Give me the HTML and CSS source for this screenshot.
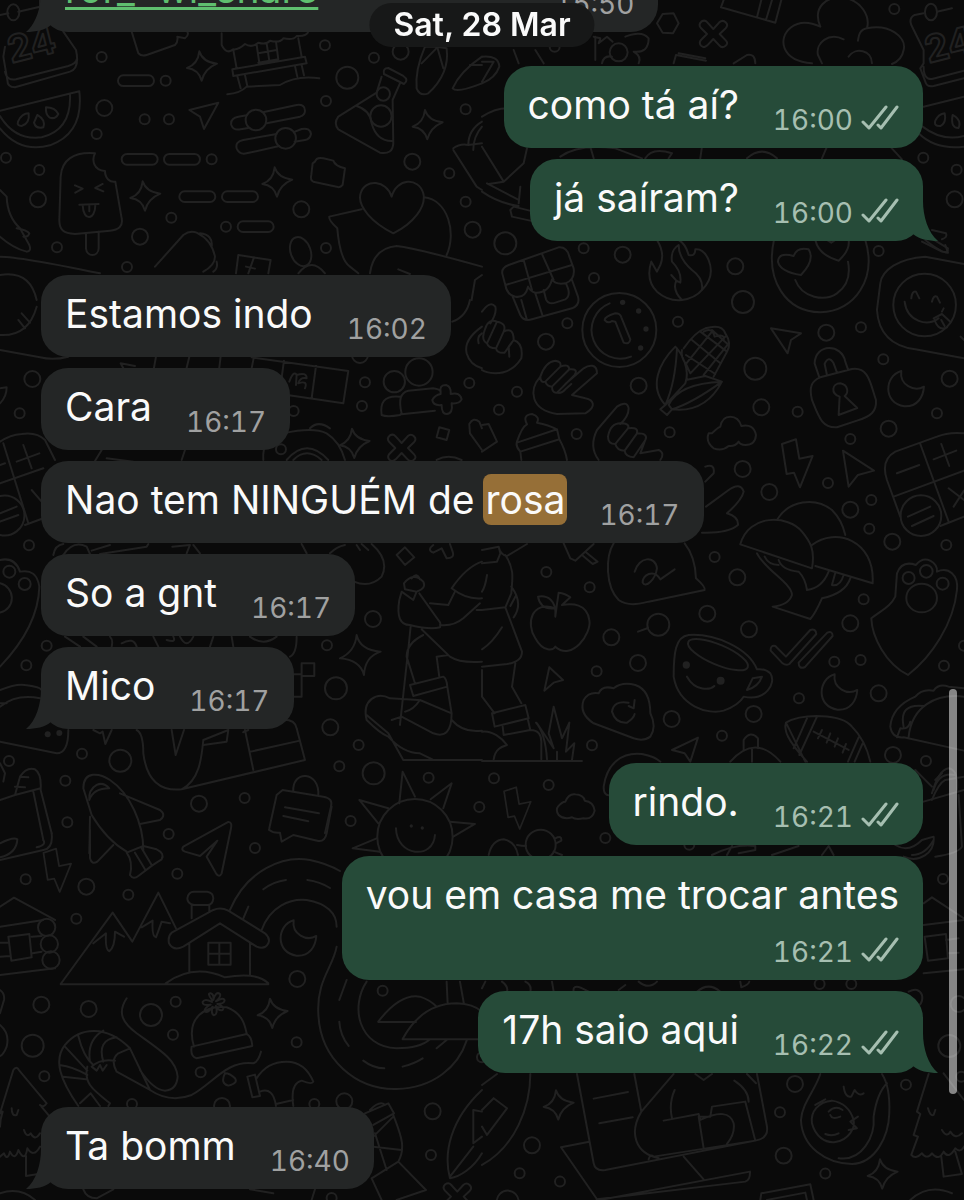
FILE: index.html
```html
<!DOCTYPE html>
<html lang="pt">
<head>
  <meta charset="UTF-8" />
  <meta name="viewport" content="width=device-width, initial-scale=1.0"/>
  <title>Chat</title>
  <link rel="stylesheet" href="styles.css">
</head>
<body>

  <!-- Doodle wallpaper -->
  <svg class="wallpaper" viewBox="0 0 964 1200" preserveAspectRatio="xMidYMin slice" aria-hidden="true">
    <defs>
      <circle id="s" r="15"/>
      <circle id="m" r="24"/>
      <circle id="l" r="33"/>
      <path id="star" d="M-8 -44Q2 -12 45 -7Q8 8 -1 44Q-10 10 -45 6Q-12 -6 -8 -44Z"/>
      <path id="moon" d="M-14 -52C-65 -38 -70 45 -5 54C35 56 52 25 54 -5C25 12 -20 -10 -14 -52Z"/>
      <path id="bolt" d="M-50 -58L-8 -72L2 -14L42 -22L4 72L-14 28L-36 32Z"/>
      <path id="cross" d="M0 -15L18 -35Q28 -44 37 -35Q46 -26 37 -17L19 0L38 20Q46 28 36 36Q26 44 18 34L0 15L-18 34Q-28 44 -37 35Q-44 26 -37 18L-19 0L-37 -18Q-46 -28 -36 -37Q-26 -44 -18 -35Z"/>
      <rect id="dash" x="-54" y="-16" width="108" height="32" rx="16"/>
    </defs>

    <g transform="scale(.3333)">
      <!-- calendar and watermelon -->
      <text class="doodle-text" transform="translate(34 190) rotate(-14)">24</text>
      <path d="M0 45L25 40M55 35L120 20M120 0V45M190 95L228 150Q240 205 210 215L45 262Q22 262 22 240L10 170L15 140M15 215Q20 243 48 238L205 198Q230 190 230 178"/>
      <ellipse cx="40" cy="37" rx="18" ry="24"/>
      <path d="M0 332L238 274Q252 400 150 436Q60 460 0 385M0 348Q45 422 125 412Q215 390 210 283"/>
      <path d="M54 365Q65 340 86 340Q90 370 65 378Q50 378 54 365ZM112 345Q138 360 130 382Q108 388 102 368ZM138 322Q165 322 175 342Q165 360 148 352Q136 342 138 322Z"/>
      <!-- ice cream -->
      <path d="M182 530C185 480 220 455 285 460C275 480 280 510 315 513C315 535 330 548 346 545L365 655C370 680 355 690 330 692L225 702C190 700 178 690 178 660ZM258 700V745C260 772 295 772 296 745V695M225 556L248 566L226 578M308 552L286 564L310 574M238 614L296 612M248 616C250 665 286 662 286 614M268 616V634"/>
      <path d="M0 570L20 590M20 590Q22 650 60 685L88 735Q95 755 80 755Q40 745 0 710M50 685Q80 690 88 700Q85 712 70 710M0 770Q60 770 300 820M0 825Q90 810 110 900"/>
      <!-- market stall, sliders -->
      <path d="M395 95L415 160Q425 170 440 165L525 135Q535 125 532 110L555 115Q568 105 562 95M665 100V135Q680 165 700 148Q715 150 735 132Q755 145 775 128Q800 135 810 122Q840 130 850 115Q880 122 890 108Q920 110 925 95M700 150L710 205M895 115L905 170M770 135L778 188M800 130L808 182M775 160L830 150M775 188L835 178L828 125M697 208L915 170L920 190L700 228ZM712 228L722 265M735 225L742 258M885 198L892 230M905 195L912 226M682 283Q720 280 740 260L840 255Q890 225 958 235"/>
      <path d="M740 346L715 350Q690 355 694 375Q700 392 722 388L745 384M792 336L890 315Q915 312 915 332Q915 345 900 350L800 370M830 402L730 420Q705 425 710 445Q718 465 740 460L838 438M885 395L905 387Q930 382 933 402Q930 418 915 420L884 425"/>
      <circle cx="768" cy="360" r="31"/><circle cx="857" cy="415" r="31"/>
      <path d="M568 330L655 308L612 387L600 350Z"/>
      <!-- flask -->
      <path d="M1165 204L1210 228Q1228 240 1212 252L1152 222Q1148 204 1165 204ZM1145 230L1130 278L1015 350Q1000 370 1015 388L1140 458Q1178 465 1180 430L1178 300L1200 250M1070 318Q1110 330 1115 370Q1130 425 1178 423"/>
      <circle cx="1150" cy="282" r="20"/><circle cx="1143" cy="348" r="32"/>
      <path d="M1275 140Q1245 210 1250 265Q1260 290 1285 280Q1350 220 1340 145L1310 140ZM1265 190L1312 142L1330 205M1446 170Q1380 215 1358 265Q1370 280 1446 250M1410 195H1446"/>
      <!-- lego, heart, hand -->
      <path d="M938 490L945 485Q950 470 970 475L1000 482Q1005 498 1035 505L1028 555Q1020 565 1010 560L940 545Q930 540 934 525Z"/>
      <path d="M1180 700C1120 670 1070 620 1082 580C1095 535 1160 540 1175 590C1190 535 1255 530 1270 580C1280 620 1240 670 1180 700ZM1085 628L988 650Q985 660 1012 685Q1020 780 1050 800L1075 820M1272 592C1345 600 1370 700 1340 765M1110 820Q1120 745 1190 738Q1250 745 1446 800M1195 808L1230 822M1446 825L1425 840L1415 900"/>
      <path d="M1446 365Q1405 390 1405 435M1360 445Q1380 430 1405 435L1446 430M1360 450L1430 560L1446 570M1446 380Q1420 410 1420 450"/>
      <path d="M465 800L550 705Q570 690 590 698Q635 720 645 770Q645 795 610 815M600 700Q640 705 635 740M650 785Q655 805 640 815M715 765L812 780L805 820M715 765L708 820M762 772L745 820M738 800L765 806"/>
      <ellipse cx="902" cy="755" rx="30" ry="45" transform="rotate(-20 902 755)"/>
      <path d="M895 820Q935 770 975 820"/>
      <use href="#dash" x="408" y="242"/><use href="#dash" x="419" y="478"/><use href="#dash" x="546" y="478"/><use href="#dash" x="592" y="590"/><use href="#dash" x="720" y="590"/><use href="#dash" x="767" y="680"/>
      <use href="#star" x="606" y="198"/><use href="#star" x="436" y="588"/><use href="#star" x="832" y="546"/><use href="#star" x="1283" y="374"/>
      <use href="#s" x="305" y="171"/><use href="#s" x="497" y="242"/><use href="#s" x="434" y="358"/><use href="#s" x="507" y="358"/><use href="#s" x="290" y="402"/><use href="#s" x="18" y="473"/><use href="#s" x="118" y="510"/><use href="#s" x="635" y="478"/><use href="#s" x="514" y="653"/><use href="#s" x="678" y="680"/><use href="#s" x="171" y="742"/><use href="#s" x="381" y="801"/><use href="#s" x="975" y="136"/><use href="#s" x="1122" y="173"/><use href="#s" x="978" y="303"/><use href="#s" x="1397" y="328"/><use href="#s" x="1348" y="520"/><use href="#s" x="1397" y="605"/><use href="#s" x="978" y="744"/>
      <use href="#m" x="313" y="324"/><use href="#m" x="114" y="598"/><use href="#m" x="420" y="710"/><use href="#m" x="904" y="628"/><use href="#m" x="1237" y="485"/><use href="#m" x="1418" y="689"/><use href="#m" x="1202" y="155"/><use href="#l" x="1042" y="233"/>
    </g>

    <g transform="translate(482 0) scale(.3333)">
      <!-- blossom, hexagon, second calendar -->
      <path d="M525 70L542 42L575 40L590 70L573 100L542 98ZM725 0L717 22L880 68L898 0M838 0L825 52M870 0L852 60"/>
      <use href="#cross" x="694" y="102"/>
      <path d="M1015 80C990 20 1035 -10 1080 -8C1140 0 1165 50 1155 85C1130 90 1130 110 1128 122M1155 85C1220 70 1275 110 1265 150Q1260 180 1230 192M1015 80C940 45 890 100 908 145Q925 185 990 190M1085 118C1040 95 1000 130 1008 165L1020 190M1100 170C1120 140 1170 150 1170 190"/>
      <text class="doodle-text" transform="translate(1340 190) rotate(-14)">24</text>
      <path d="M1325 40L1298 45Q1280 55 1288 75L1325 150V190L1315 205L1330 245Q1335 262 1355 258L1446 235M1325 200Q1325 240 1350 237L1446 212M1365 35L1410 25"/>
      <ellipse cx="1347" cy="36" rx="18" ry="25"/>
      <path d="M1325 320L1446 290M1310 400Q1360 450 1446 440M1322 380Q1380 425 1446 408M1360 362Q1370 342 1388 340Q1394 368 1376 378Q1355 380 1360 362ZM1412 345Q1440 360 1430 384Q1405 385 1412 345Z"/>
      <path d="M335 110L355 115L350 130L375 110L392 125M340 110V180M430 110Q480 90 500 115Q500 160 455 155Q480 170 470 190M360 190Q365 165 390 170"/><circle cx="410" cy="157" r="27"/>
      <path d="M575 190L582 165L672 182M590 160L670 175M755 190L795 165Q820 160 820 190M95 150L110 190M160 150L185 190M0 170Q50 165 52 200Q40 235 0 250M0 185L35 185L0 245"/>
      <!-- paper bag left of the bubbles -->
      <path d="M0 350Q40 325 75 325M0 440L65 545L125 490L135 445M15 550L110 600M0 575Q50 610 110 618M65 545L20 552M115 560L110 610M85 630L95 620L155 635M85 630L90 650L158 665M235 470Q290 430 400 445L480 475M325 440L335 475M490 475Q510 440 570 460L560 475M660 440L655 475M795 475Q840 435 885 475M1035 440L1020 475M1225 440L1260 478"/>
      <path d="M1350 690L1392 700Q1398 712 1380 718M1330 700L1360 722L1398 745Q1400 760 1380 755L1320 725"/>
      <use href="#s" x="1237" y="27"/><use href="#s" x="218" y="140"/><use href="#s" x="1324" y="473"/><use href="#s" x="1424" y="509"/><use href="#m" x="1418" y="598"/>
    </g>

    <g transform="translate(482 240) scale(.3333)">
      <!-- shop, flame, heart-eyes -->
      <path d="M62 105Q55 85 80 75L230 22Q255 20 262 50L275 85Q280 120 250 130Q220 135 210 118Q200 160 160 158Q145 155 138 140Q130 175 100 170Q75 165 70 135ZM70 135L270 75M125 60L150 150M180 42L215 120M92 170L115 225Q125 245 150 238L270 205Q295 195 288 170L270 120M118 180L135 240M160 160L182 228M185 150L192 178Q200 195 220 188L250 178Q265 170 258 145L252 130"/>
      <path d="M525 0Q550 40 535 75L525 95L508 65Q490 120 525 155Q560 185 600 180Q570 150 583 122L595 128Q600 95 570 65Q565 30 590 15Q590 55 630 90Q665 115 660 150Q700 110 680 60Q665 25 640 28Q640 50 620 45Q610 10 590 0M568 105L583 122M600 180Q640 175 660 150"/>
      <circle cx="412" cy="270" r="111"/><path d="M447 350A86 86 0 1 1 383 190"/>
      <path d="M390 243Q378 252 368 240Q368 230 400 220Q415 220 418 232L445 298Q442 315 425 308L400 245Z"/>
      <g class="solid"><circle cx="422" cy="187" r="8"/><circle cx="470" cy="213" r="8"/><circle cx="492" cy="267" r="8"/><circle cx="476" cy="324" r="8"/></g>
      <path d="M876 0C850 120 910 215 1015 217C1120 215 1185 115 1150 0M957 105Q895 95 888 65Q890 35 935 48Q945 20 980 28Q1000 60 957 105ZM1000 0Q1010 45 1070 62Q1105 30 1100 0M1035 0L1048 8L1060 0M940 120C960 175 1030 185 1065 160C1100 135 1105 100 1098 65"/>
      <!-- smiley bubble -->
      <path d="M1446 72L1330 50C1250 55 1200 90 1195 130L1185 210C1190 290 1240 320 1300 328L1446 355M1268 185C1275 245 1340 262 1370 235M1380 215L1385 205M1288 175Q1290 152 1302 155L1312 175M1350 185Q1355 165 1365 170L1374 188M1355 235L1380 222L1405 245M1358 240Q1370 275 1395 262M1378 240L1388 258M1330 0Q1380 40 1398 38L1390 15M1436 290L1446 300"/>
      <circle cx="1328" cy="195" r="94"/>
      <!-- hands -->
      <path d="M0 215Q25 180 40 200Q45 220 25 250M10 265Q20 235 45 245L15 310M15 310Q-5 300 10 265M45 245Q75 250 65 275L42 325Q20 325 15 310M65 275Q95 260 95 300L68 338Q45 340 42 325M95 300Q125 310 118 355Q90 400 40 400Q10 398 0 390M82 350L80 320L95 300"/>
      <path d="M175 410C140 450 145 510 225 522L310 520C345 500 335 480 310 475L270 465L345 400C345 370 320 375 305 385L250 432M175 410Q190 365 220 362Q240 365 235 380L190 425Q175 430 175 410M235 380Q260 370 262 388L210 440Q195 440 190 425M262 388Q290 385 278 405L225 458Q210 460 210 440M225 458Q238 462 250 448L268 432"/>
      <path d="M350 660Q320 620 345 570L405 500Q435 480 440 505Q440 530 415 552M378 590Q385 550 415 550Q445 550 438 565L400 612Q378 612 378 590M438 565Q470 560 465 580L428 632Q405 632 400 612M465 580Q500 580 490 600L455 652Q430 650 428 632M490 600L475 640L530 630Q550 640 535 660"/>
      <!-- corn -->
      <path d="M580 320C530 370 500 440 550 495L610 430C625 390 600 340 580 320ZM585 325Q580 430 550 495L535 508L555 525L570 508L560 495Q590 430 720 425Q670 520 570 508M570 508Q630 490 720 425L670 408L612 420M605 325Q640 275 670 265Q720 250 730 280Q750 310 735 335L695 410M600 330Q595 350 612 372L625 400M612 345L700 402M630 300L715 370M655 275L735 335M690 270L740 315M612 372L690 275M625 400L730 290M665 405L740 310M665 275Q690 260 698 290Q730 280 725 300"/>
      <path d="M867 265L957 280L927 300L917 340Z"/>
      <!-- lock -->
      <path d="M1012 412L998 370C1000 310 1080 310 1090 365L1098 388M1035 405L1028 372Q1040 345 1055 370L1065 398M1015 412L1110 387C1160 380 1165 430 1182 480C1185 515 1165 530 1125 542L1065 562C1020 565 1010 530 990 480C980 440 990 422 1015 412ZM1070 525L1073 470C1045 460 1050 430 1075 430C1100 435 1100 460 1088 468L1126 504Z"/>
      <use href="#moon" x="1272" y="445"/><use href="#bolt" x="950" y="670"/>
      <path d="M690 580Q710 560 715 560Q720 530 745 530Q770 530 778 558Q815 550 822 585Q820 615 790 615Q775 615 770 605Q760 620 740 618Q720 635 695 625Q670 605 680 580ZM1083 632L1176 692L1128 705L1100 740Z"/>
      <!-- baby bottle, calculator -->
      <path d="M118 660L115 635Q100 620 105 605Q120 560 135 553Q120 525 150 522Q175 530 165 548Q200 555 225 568L232 598L115 635M105 608L225 568M232 598Q250 630 255 660M0 555L20 552L45 605L0 635"/>
      <path d="M1446 580Q1400 575 1365 590L1240 635Q1195 660 1215 720L1255 830M1315 612L1400 845M1235 770L1446 692M1375 858L1446 830M1245 700L1312 675M1355 658L1423 632M1378 612L1402 678M1400 745L1446 780M1446 752L1415 800M1278 830L1345 800M1290 858L1355 828"/><circle cx="1317" cy="827" r="61"/>
      <!-- hand behind the highlighted message -->
      <path d="M670 680Q700 670 695 700L670 725M672 800L740 750Q775 725 785 755Q780 780 735 820Q770 830 768 855Q740 880 660 878"/>
      <use href="#s" x="305" y="25"/><use href="#s" x="336" y="114"/><use href="#s" x="256" y="250"/><use href="#s" x="588" y="245"/><use href="#s" x="1190" y="33"/><use href="#s" x="1137" y="262"/><use href="#s" x="1204" y="358"/><use href="#s" x="105" y="455"/><use href="#s" x="51" y="509"/><use href="#s" x="284" y="582"/><use href="#s" x="563" y="577"/><use href="#s" x="947" y="515"/><use href="#s" x="1365" y="520"/><use href="#s" x="1105" y="597"/><use href="#s" x="1038" y="729"/><use href="#s" x="1168" y="780"/><use href="#s" x="1162" y="866"/>
      <use href="#m" x="422" y="44"/><use href="#m" x="760" y="79"/><use href="#m" x="192" y="305"/><use href="#m" x="470" y="437"/><use href="#m" x="1033" y="278"/><use href="#m" x="838" y="502"/><use href="#m" x="1403" y="416"/><use href="#m" x="1220" y="566"/><use href="#m" x="782" y="687"/><use href="#m" x="862" y="756"/><use href="#m" x="1105" y="809"/>
      <use href="#l" x="70" y="10"/><use href="#l" x="783" y="186"/><use href="#l" x="820" y="386"/>
    </g>

    <g transform="translate(0 300) scale(.3333)">
      <path d="M0 105Q85 110 110 20M55 60L75 85M65 40L90 68M0 150L120 172Q160 182 205 170M0 265L20 262Q20 290 0 310"/>
      <!-- film strip, people -->
      <path d="M370 205L362 190L405 198M468 170L462 203M568 170L560 203M662 170L658 203M755 172L1045 213L1030 310L862 285M852 182L840 270M948 198L935 295M868 245Q880 210 890 225L888 255M890 225Q920 215 920 235Q900 230 895 250Q925 240 915 265M762 170L755 205"/>
      <circle cx="1183" cy="245" r="32"/><circle cx="1257" cy="216" r="41"/>
      <path d="M1200 290C1150 285 1140 310 1145 345Q1160 352 1200 345L1205 340M1205 340Q1190 280 1225 272L1300 265Q1320 268 1322 275M1205 343L1305 332M1322 275Q1318 255 1338 255Q1355 260 1352 282Q1380 275 1385 298Q1378 312 1355 310Q1360 340 1340 342Q1325 342 1325 315Q1300 318 1297 300Q1305 285 1322 282Z"/>
      <path d="M1357 65Q1400 50 1410 0M1446 80Q1390 120 1400 160Q1410 195 1446 205M1446 100Q1430 110 1436 130"/>
      <use href="#cross" x="1205" y="444"/><use href="#star" x="1064" y="430"/>
      <path d="M1318 382L1348 390L1340 420L1310 412ZM1408 372Q1420 350 1438 365L1446 385M1408 372L1410 400L1446 450M790 480Q785 410 850 400Q940 380 980 400Q1020 425 1035 480M860 480Q920 410 985 480M880 480Q920 440 965 480M930 385Q955 360 990 385M1310 480Q1345 460 1385 480"/>
      <!-- calculator on the left edge -->
      <path d="M0 425Q30 405 65 402Q110 395 135 420L165 480M10 430L85 670M0 550L130 505M75 675L130 655M50 485L118 460M70 435L95 505M95 570L125 605M0 495L15 490M0 640L50 620M0 665L55 645"/>
      <path d="M0 588A60 60 0 1 1 0 705M305 450L285 483M555 450L545 480M320 475L400 485M160 765Q165 735 190 732M190 765Q220 720 260 740L270 762M275 752L330 735M300 762L440 740L445 732M517 740L570 735L560 760M580 735L600 760M905 732L920 760M990 760Q1010 740 1035 735M1115 732Q1170 780 1145 830Q1110 865 1062 845M1070 735L1080 750M1085 732L1105 750M1300 735Q1280 750 1300 758L1325 745L1340 775Q1365 775 1358 755L1350 732M1215 742L1243 772L1215 795L1190 765Z"/>
      <!-- paw on the left edge -->
      <path d="M0 780Q45 770 60 815Q110 805 118 860Q115 980 0 1100"/><circle cx="28" cy="815" r="18"/><circle cx="74" cy="852" r="18"/><path d="M0 850A45 45 0 0 1 0 938"/>
      <use href="#m" x="97" y="237"/><use href="#s" x="59" y="340"/><use href="#s" x="1095" y="247"/><use href="#s" x="1086" y="318"/><use href="#s" x="881" y="333"/><use href="#s" x="1408" y="249"/><use href="#s" x="843" y="448"/><use href="#s" x="87" y="736"/><use href="#m" x="1080" y="165"/>
    </g>

    <g transform="translate(482 500) scale(.3333)">
      <!-- mushrooms -->
      <path d="M775 133C800 40 920 45 960 95C985 125 1000 150 990 205ZM885 60C920 0 1000 -10 1050 30Q1080 60 1090 105M990 135C1060 80 1180 120 1172 250L1000 198M825 160C850 210 930 250 930 285Q920 315 872 320L985 357Q1000 340 1020 295Q1090 280 1105 235M848 170Q860 195 890 195M890 180Q900 210 950 215Q970 235 975 270Q1020 265 1040 215M1060 218L1050 255Q1075 260 1085 225"/>
      <!-- note bubble, apple -->
      <path d="M395 130C370 170 370 260 410 300C440 320 470 312 500 305L668 270Q672 262 642 235Q640 170 608 130M458 215C470 170 520 165 525 205C520 240 490 265 482 248C480 225 515 205 535 238L578 208"/>
      <path d="M220 325C150 300 130 370 160 415C185 460 215 450 220 440C270 485 330 400 322 360C315 310 270 310 240 315L265 292Q250 280 230 278Q225 310 220 350C225 300 195 285 168 290Q175 330 218 325M468 395L498 384M245 130L265 175L280 182L335 132M310 155L347 185L332 192L300 165"/>
      <path d="M0 150L50 140L55 160L45 185L0 190M50 140Q55 165 75 168L135 132M70 165C100 210 90 240 88 280L70 322L120 455Q120 485 75 492L0 500M0 330L70 322M60 382Q30 430 0 448M15 225Q10 260 0 275M88 260Q125 310 95 352M100 290L85 318M100 490L90 560L118 610M0 510V590L38 640L30 640L130 615L140 655L38 680L30 640M62 680L65 705L145 690L138 660M35 778C40 745 60 740 75 735C60 715 30 690 0 695M145 690Q180 690 178 730V778M0 783H300M162 668Q190 700 195 778M165 670L215 745L200 700L215 620L240 715L262 668L252 755L277 730L270 780M225 755V780"/>
      <!-- mug -->
      <path d="M620 405C580 410 575 460 575 530C590 620 680 645 725 632Q770 615 785 590C850 605 885 550 865 520Q850 505 825 508C800 445 700 400 620 405ZM615 530C640 575 685 570 697 558M795 570L812 535L840 530Q830 560 795 570Z"/>
      <ellipse cx="708" cy="464" rx="97" ry="30" transform="rotate(23 708 464)"/>
      <g class="solid"><circle cx="613" cy="495" r="11"/><circle cx="716" cy="542" r="12"/></g>
      <path d="M880 438L912 470L985 390Q1002 385 1003 402L922 492Q912 498 902 490L866 452Q865 435 880 438ZM950 488L1036 398Q1052 392 1052 408L968 502Q950 508 950 488ZM187 572L202 502L243 540L215 548Z"/>
      <path d="M350 580Q360 555 395 565Q420 545 460 555Q505 570 505 640Q525 680 505 710Q485 725 455 715L335 670Q290 640 305 600Q320 575 350 580ZM440 608Q395 600 390 635Q400 670 435 668Q455 655 458 642M440 618L455 625L458 600"/>
      <!-- paw -->
      <path d="M1278 525C1210 490 1170 410 1168 355C1200 330 1225 320 1240 290L1245 220Q1260 180 1302 195C1330 160 1370 190 1365 215C1400 200 1430 225 1425 270C1415 370 1350 470 1278 525Z"/>
      <circle cx="1280" cy="234" r="18"/><circle cx="1333" cy="214" r="19"/><circle cx="1382" cy="251" r="18"/><ellipse cx="1319" cy="294" rx="46" ry="43"/>
      <!-- taco, football -->
      <path d="M1446 565L1400 560Q1370 550 1355 572Q1320 565 1300 590Q1230 620 1225 680Q1230 715 1265 712L1446 752M1446 590C1360 580 1290 620 1280 710M1245 712L1255 685Q1280 690 1285 665M1265 680Q1250 610 1325 618M1350 900Q1370 850 1390 840L1446 830M1350 860L1300 810"/>
      <path d="M975 785C915 720 905 690 912 668C960 640 1080 640 1110 680Q1150 720 1165 785M912 668L970 785M975 655L935 745M1005 650L952 765M1130 712L1098 785M1142 730L1118 785M995 695L1100 750M1020 690L1008 715M1045 700L1034 728M1068 715L1058 740M1092 732L1082 758"/>
      <use href="#moon" x="1072" y="575"/>
      <path d="M570 750L648 713L625 785L608 760ZM365 860C375 790 420 755 480 762Q520 770 535 785M365 860Q365 890 385 885M745 785Q820 700 895 785M785 750V720Q805 690 828 715V745M810 745V785M1355 870Q1370 815 1420 825M1380 820L1360 840"/>
      <use href="#s" x="193" y="216"/><use href="#s" x="323" y="262"/><use href="#s" x="698" y="171"/><use href="#s" x="344" y="514"/><use href="#s" x="330" y="736"/><use href="#s" x="720" y="707"/><use href="#s" x="951" y="595"/><use href="#s" x="1057" y="485"/><use href="#s" x="1136" y="480"/><use href="#s" x="1145" y="298"/><use href="#s" x="1393" y="135"/><use href="#s" x="1386" y="497"/><use href="#s" x="1332" y="783"/><use href="#s" x="1446" y="437"/>
      <use href="#m" x="766" y="232"/><use href="#m" x="676" y="341"/><use href="#m" x="388" y="412"/><use href="#m" x="468" y="489"/><use href="#m" x="801" y="388"/><use href="#m" x="1105" y="370"/><use href="#m" x="1231" y="125"/><use href="#m" x="1190" y="580"/><use href="#m" x="815" y="642"/><use href="#m" x="569" y="657"/><use href="#m" x="1233" y="765"/><use href="#l" x="529" y="374"/>
    </g>

    <g transform="translate(0 540) scale(.3333)">
      <!-- musician -->
      <path d="M1198 180C1190 230 1200 255 1230 255Q1290 270 1320 262Q1325 250 1315 240L1258 160M1198 180L1205 155L1240 180L1250 155M1212 130Q1240 95 1270 125Q1280 145 1250 155L1215 148ZM1235 115Q1250 95 1260 118M1320 255Q1360 260 1390 235L1440 190M1290 190L1345 195L1365 155M1446 65Q1400 80 1355 145Q1400 180 1446 175M1232 260L1228 300L1200 555M1265 268L1350 350Q1380 370 1446 365M1270 285Q1220 310 1220 350L1245 430M1230 435L1330 410Q1340 415 1342 440L1240 468ZM1310 350L1318 410M1310 350L1345 345M1260 480Q1240 510 1215 515M1342 440L1355 520Q1355 600 1300 580L1205 530L1175 540M1260 480L1355 520M1100 540C1085 480 1130 455 1170 475L1255 480M1100 525L1165 580L1210 660H1446M1100 540Q1140 580 1165 590Q1210 640 1260 640L1300 660M1355 540Q1390 580 1446 572M1430 210H1446"/>
      <path d="M1070 285Q1080 330 1142 335Q1095 350 1092 405Q1080 360 1020 355Q1065 335 1070 285ZM905 370H943V408H905ZM870 403H905V470H870M195 290L240 320M250 290L290 320M335 320Q340 300 330 290M365 310Q400 290 410 320M460 290L475 320M500 300Q530 310 520 290M540 290Q560 330 580 290M640 290L630 320M695 290L700 320M750 290Q790 320 830 290M890 290Q890 340 870 350"/>
      <!-- taco on the left -->
      <path d="M0 450Q50 430 75 435Q120 440 125 450M0 500Q50 460 120 475M0 605L170 640Q205 640 205 570M0 490L20 490"/><g class="solid"><circle cx="143" cy="583" r="9"/><circle cx="178" cy="579" r="9"/></g>
      <path d="M280 570L300 580L308 575L316 612L335 570M410 570Q430 580 430 640C440 720 480 755 545 748C600 720 605 650 610 600L685 570M515 570L527 645L552 570M610 615L680 605L685 570M545 748L915 660L890 565Q885 535 840 540M735 570L760 690M752 635L900 602M735 575Q720 580 745 570"/>
      <!-- message card, plane -->
      <path d="M880 755C875 690 960 690 955 768M848 750L970 770Q1000 775 993 800L975 880M830 765L848 750M830 765L808 865Q806 870 808 870M855 802L957 820M850 828L925 844"/>
      <path d="M250 745C250 690 300 700 330 720C390 760 430 850 430 930M250 745L275 825Q320 900 380 935M268 780Q265 750 290 735Q310 725 328 745Q280 745 268 780M360 760L480 810Q500 825 480 840L420 852M270 830L268 940"/>
      <path d="M0 670L15 700L10 725M45 765L0 780M45 765L60 710Q80 680 105 688Q125 700 122 750L155 880M45 765L122 745M60 710L85 712M45 740L75 742M100 755L130 900"/>
      <!-- sun -->
      <circle cx="1245" cy="890" r="113"/><path d="M1198 790L1208 695L1245 770M1292 778L1355 730L1330 805M1350 845L1425 852L1360 890M1165 805L1078 780L1135 850M1140 935L1058 925L1130 895M1188 865C1190 950 1300 960 1305 885"/><g class="solid"><circle cx="1234" cy="858" r="5"/><circle cx="1267" cy="864" r="5"/></g>
      <use href="#s" x="140" y="317"/><use href="#s" x="79" y="376"/><use href="#s" x="246" y="641"/><use href="#s" x="27" y="663"/><use href="#s" x="196" y="722"/><use href="#s" x="202" y="847"/><use href="#s" x="981" y="316"/><use href="#s" x="1076" y="615"/><use href="#s" x="1018" y="679"/><use href="#s" x="1286" y="713"/><use href="#s" x="734" y="774"/><use href="#s" x="506" y="882"/><use href="#s" x="1052" y="843"/><use href="#s" x="1438" y="801"/><use href="#m" x="1119" y="237"/><use href="#m" x="991" y="562"/><use href="#m" x="597" y="791"/><use href="#l" x="1008" y="445"/><use href="#l" x="361" y="662"/><use href="#l" x="1121" y="700"/>
    </g>

    <g transform="translate(0 800) scale(.3333)">
      <path d="M155 100Q160 145 130 150L0 180M130 120Q140 135 110 142M0 130Q40 110 52 118Q50 160 0 172"/>
      <path d="M270 90V175Q275 195 292 185L340 135M380 158L430 138M380 158Q400 185 390 225Q400 240 415 228L452 200Q465 190 485 178Q495 160 470 148L430 138M405 158L435 208M425 145L455 195"/>
      <path d="M550 140L685 66Q698 65 692 90L665 220Q658 235 648 220L620 170L652 122L600 168L555 155Q542 150 550 140ZM808 90Q820 100 840 98L845 125L880 105L955 123Q975 125 980 100L995 20"/>
      <use href="#bolt" x="175" y="210" transform="translate(18 22) scale(.9)"/>
      <!-- mountains and cabin -->
      <path d="M182 552L338 338L397 425L475 278L528 385M280 430L318 400Q315 450 328 454Q345 440 345 395L372 410M425 382L458 362Q455 410 468 412Q480 380 485 365L510 370M182 553H805M497 550Q580 490 675 532Q770 515 805 550"/>
      <path d="M568 430V515M750 430V525M575 355V315M628 335V315M582 275H622Q640 278 640 295Q638 315 622 315H582Q562 312 562 295Q565 275 582 275ZM515 398L640 330Q662 320 685 332L795 400Q812 415 805 430Q795 450 770 440L660 370L550 440Q520 455 507 430Q503 408 515 398ZM625 428H692V494H625ZM658 428V494M625 461H692"/>
      <!-- road -->
      <path d="M690 330C740 210 850 165 930 180Q980 190 1020 213M785 390C810 320 870 295 920 300C980 310 1010 340 1010 380M730 355L745 320M790 268Q820 245 858 240M922 240Q960 245 990 264M1010 440C1000 500 950 540 955 640C960 780 1070 870 1190 867C1300 865 1375 800 1400 722M1100 545C1050 620 1075 740 1190 745Q1260 745 1290 718M1040 540L1018 600M1018 665Q1020 705 1046 738M1090 782Q1120 805 1153 805M1208 800Q1245 790 1268 775M1310 745L1340 720M1135 665Q1200 580 1260 590Q1290 600 1310 620M1135 666H1248M1208 717C1250 640 1310 610 1370 610Q1420 612 1446 635M1208 718H1446M1340 545L1343 610M1380 545L1392 612"/>
      <use href="#moon" x="895" y="413"/><use href="#star" x="818" y="640"/>
      <!-- log cabin, shrimp, beanie -->
      <path d="M0 320L42 293L165 360M0 380L130 360M0 428H25M0 470L30 468M0 525L165 505M25 410L88 402L95 472L34 482ZM95 410L125 408M98 460L125 455"/><circle cx="140" cy="382" r="26"/><circle cx="148" cy="432" r="26"/><circle cx="153" cy="480" r="26"/>
      <path d="M235 918C180 840 160 780 195 735C240 680 320 675 390 745L450 870L350 815Q330 780 355 760L390 745M350 712Q290 720 310 785M310 692Q260 720 270 785M235 708Q250 770 280 795M195 740L262 812M178 795Q220 800 262 825M190 830L258 838M262 800C250 850 280 870 330 910L325 918M240 910L272 880L300 918M345 782Q300 775 275 800L290 812L300 795L308 812L320 795M380 595C350 640 370 670 410 700C480 750 530 780 533 830Q530 870 495 872Q460 870 420 810M450 870Q510 910 575 885C640 850 680 780 760 790Q775 785 783 755M675 820Q660 850 685 857Q715 850 705 835Q690 820 675 820"/>
      <path d="M0 570Q15 580 12 600Q0 640 0 640M0 675Q30 700 20 740Q10 765 0 768"/>
      <path d="M582 740C555 650 620 615 680 622C730 640 735 680 740 700M575 740L740 702Q755 710 757 738L590 775Q570 770 575 740ZM636 600Q620 578 632 580Q642 582 640 600Q648 572 660 582Q664 590 648 604Q672 590 674 602Q672 612 652 612Q676 620 668 630Q656 634 648 618Q654 644 642 646Q632 642 638 620Q624 642 614 634Q612 624 632 614Q606 618 608 606Q614 594 636 606"/>
      <!-- hammer, tree -->
      <path d="M742 830L765 824L780 888L757 892ZM770 835Q800 785 860 785Q915 785 940 845Q935 855 905 842Q870 850 880 918M780 875Q820 860 828 918M828 912L880 900M0 940L40 810Q50 795 58 812L140 910Q130 925 120 915L145 945M0 940L8 935Q0 960 0 980M35 925Q35 950 50 945L55 930M72 990Q80 1015 92 1000Q105 1025 120 1000M0 1070L12 1060Q22 1085 30 1055Q45 1085 55 1050Q75 1090 82 1045Q100 1075 120 1040M78 1068V1128L115 1122M0 1180Q60 1160 105 1200"/>
      <path d="M1095 940L1165 910L1182 940L1120 975M1110 930Q1140 900 1155 915M1180 945C1200 1000 1220 1040 1195 1085L1115 1135M1125 1000L1160 1110M1120 1040L1205 1050M1180 950L1120 1010M1195 1085L1278 1170L1190 1200M1115 1135L1145 1200M1446 870C1350 960 1330 1060 1350 1135C1380 1130 1420 1105 1446 1060M1420 930L1446 935M1420 930V1030L1446 1010M1350 1130L1420 1040M250 1168Q260 1195 290 1195L340 1168M750 1168L820 1180M945 1168L935 1200"/>
      <use href="#cross" x="1372" y="1190"/>
      <use href="#s" x="77" y="238"/><use href="#s" x="385" y="284"/><use href="#s" x="229" y="356"/><use href="#s" x="532" y="221"/><use href="#s" x="765" y="144"/><use href="#s" x="527" y="605"/><use href="#s" x="519" y="704"/><use href="#s" x="602" y="817"/><use href="#s" x="133" y="829"/><use href="#s" x="890" y="727"/><use href="#s" x="1148" y="572"/><use href="#s" x="1293" y="1065"/><use href="#s" x="396" y="912"/><use href="#s" x="943" y="912"/><use href="#s" x="1446" y="772"/><use href="#s" x="995" y="1194"/>
      <use href="#m" x="259" y="260"/><use href="#m" x="124" y="614"/><use href="#m" x="266" y="627"/><use href="#m" x="892" y="537"/><use href="#m" x="1033" y="904"/><use href="#m" x="1298" y="934"/><use href="#m" x="666" y="918"/><use href="#l" x="98" y="737"/><use href="#l" x="453" y="645"/>
    </g>

    <g transform="translate(482 740) scale(.3333)">
      <use href="#bolt" x="110" y="205" transform="translate(14 26) scale(.87)"/>
      <path d="M228 200Q240 185 250 185Q260 160 280 163Q305 165 308 182Q335 185 338 212Q330 240 305 235Q280 240 270 232Q245 240 230 225Q220 210 228 200ZM105 315Q120 318 132 318M215 335L240 345M220 295Q240 285 238 302L222 310M20 345Q30 300 65 298Q100 305 108 345M690 345Q760 310 820 318M735 345L750 318M770 340L820 330V318M870 345L950 318M1020 345L1040 318L1055 345M1240 315Q1280 340 1320 300L1355 290C1360 340 1310 370 1265 350M1290 345Q1330 345 1355 300M1325 185L1446 150M1350 160Q1370 90 1400 85Q1430 90 1425 150M1430 165L1440 320Q1430 340 1360 350"/>
      <circle cx="176" cy="314" r="45"/>
      <path d="M1325 490L1350 472L1446 535M1325 555L1446 540M1328 590L1392 582L1398 655L1338 662ZM1325 700L1446 688M1392 600L1430 595M1398 640L1430 638"/>
      <!-- laptop -->
      <path d="M0 745L10 725M60 725Q80 740 75 755M145 755Q150 735 130 725M210 725L215 755M275 755Q270 725 320 755M410 750L430 735M470 725Q500 750 525 725M645 755Q680 725 715 755M775 725L778 742Q800 735 802 725M1280 755Q1310 740 1320 765Q1325 790 1305 800"/>
      <path d="M285 1002L335 1270Q340 1295 370 1290L820 1202Q860 1195 855 1160L825 1002M335 1076L438 1056M352 1150L452 1132M457 1002L478 1115L575 1002M478 1115C440 1180 460 1240 530 1255L515 1250L820 1202L790 1085L690 1100L685 1130L650 1130L665 1225M545 1142L650 1122L655 1140Q740 1100 755 1150Q760 1180 735 1212M578 1050Q560 1090 570 1135M757 1022Q800 1050 800 1085M640 1002L665 1020L690 1002M795 1002L822 1030M500 1258Q505 1240 515 1250M318 1206L237 1222L345 1378L790 1325Q805 1320 804 1295L328 1385M605 1250L665 1318M835 1380L838 1360L985 1333L995 1380M855 1380L970 1358L975 1380"/>
      <!-- walnut, tree, leaf -->
      <path d="M1015 1002C1000 1050 960 1090 957 1140C960 1220 1030 1270 1110 1272C1180 1270 1220 1190 1222 1120Q1225 1040 1200 1002M1070 1255C1140 1265 1180 1190 1175 1130Q1185 1060 1215 1030M1050 1082C1010 1085 985 1115 990 1150C1000 1190 1030 1210 1060 1206C1100 1200 1120 1165 1115 1140Q1100 1090 1050 1082M1030 1182Q1050 1190 1070 1180M1085 1040Q1090 1075 1108 1070L1118 1050Q1130 1070 1145 1060M1040 1115Q1060 1095 1082 1110M1045 1125Q1050 1140 1075 1130M1000 1095L1030 1078M1100 1170L1125 1165L1105 1145L1128 1130"/>
      <path d="M1340 1002L1305 1115L1315 1122L1295 1185L1308 1190L1288 1245Q1300 1260 1320 1240Q1335 1260 1350 1240Q1370 1265 1385 1235Q1400 1260 1420 1225Q1435 1240 1446 1220M1338 1105Q1345 1130 1355 1125L1360 1110M1380 1170Q1395 1195 1405 1175Q1420 1200 1440 1180M1378 1250L1385 1310L1440 1302L1420 1235M1385 1000L1446 1080M1285 1380Q1340 1330 1410 1360"/>
      <path d="M145 1002C145 1100 100 1220 0 1275M35 1075L75 1105L15 1185L0 1160M35 1075L0 1110M0 1035L45 1002"/>
      <use href="#star" x="230" y="1095"/><use href="#star" x="1202" y="1302"/>
      <use href="#s" x="36" y="115"/><use href="#s" x="200" y="135"/><use href="#s" x="370" y="294"/><use href="#s" x="1383" y="417"/><use href="#s" x="1013" y="732"/><use href="#s" x="1108" y="732"/><use href="#s" x="622" y="314"/><use href="#s" x="894" y="1117"/><use href="#s" x="113" y="1300"/><use href="#s" x="234" y="1325"/><use href="#s" x="1030" y="1301"/><use href="#s" x="1272" y="1034"/><use href="#s" x="1438" y="1010"/>
      <use href="#m" x="150" y="1216"/><use href="#m" x="905" y="1247"/><use href="#m" x="939" y="1032"/><use href="#m" x="1430" y="792"/><use href="#l" x="1402" y="918"/><use href="#l" x="77" y="1385"/>
    </g>
  </svg>

  <svg class="icon-defs" aria-hidden="true">
    <symbol id="ticks" viewBox="0 0 38 26">
      <path d="M2 18L8 24L25 3M17 21L20 24L36 3"/>
    </symbol>
  </svg>

  <time class="date-pill" datetime="2026-03-28">Sat, 28 Mar</time>

  <main class="chat">
    <section class="group received">
      <div class="bubble wide tail">
        <p class="text"><a href="#">ror_&nbsp;&nbsp;wi_share</a></p>
        <div class="meta"><time>15:50</time></div>
      </div>
    </section>

    <section class="group sent">
      <div class="bubble">
        <p class="text">como tá aí?</p>
        <div class="meta"><time>16:00</time><svg class="ticks"><use href="#ticks"/></svg></div>
      </div>
      <div class="bubble tail">
        <p class="text">já saíram?</p>
        <div class="meta"><time>16:00</time><svg class="ticks"><use href="#ticks"/></svg></div>
      </div>
    </section>

    <section class="group received">
      <div class="bubble">
        <p class="text">Estamos indo</p>
        <div class="meta"><time>16:02</time></div>
      </div>
      <div class="bubble">
        <p class="text">Cara</p>
        <div class="meta"><time>16:17</time></div>
      </div>
      <div class="bubble">
        <p class="text">Nao tem NINGUÉM de <mark>rosa</mark></p>
        <div class="meta"><time>16:17</time></div>
      </div>
      <div class="bubble">
        <p class="text">So a gnt</p>
        <div class="meta"><time>16:17</time></div>
      </div>
      <div class="bubble tail">
        <p class="text">Mico</p>
        <div class="meta"><time>16:17</time></div>
      </div>
    </section>

    <section class="group sent">
      <div class="bubble">
        <p class="text">rindo.</p>
        <div class="meta"><time>16:21</time><svg class="ticks"><use href="#ticks"/></svg></div>
      </div>
      <div class="bubble stacked">
        <p class="text">vou em casa me trocar antes</p>
        <div class="meta"><time>16:21</time><svg class="ticks"><use href="#ticks"/></svg></div>
      </div>
      <div class="bubble tail">
        <p class="text">17h saio aqui</p>
        <div class="meta"><time>16:22</time><svg class="ticks"><use href="#ticks"/></svg></div>
      </div>
    </section>

    <section class="group received">
      <div class="bubble tail">
        <p class="text">Ta bomm</p>
        <div class="meta"><time>16:40</time></div>
      </div>
    </section>
  </main>

  <div class="scroll-thumb"></div>

</body>
</html>
```
FILE: styles.css
```css
:root {
  --bg: #0a0a0a;
  --doodle: #212121;
  --received: #242626;
  --sent: #264b39;
  --text: #fafafa;
  --radius: 27px;
}

* {
  box-sizing: border-box;
  margin: 0;
  padding: 0;
}

body {
  position: relative;
  min-height: 100vh;
  overflow: hidden;
  background: var(--bg);
  color: var(--text);
  font-family: Inter, "Liberation Sans", sans-serif;
}

/* wallpaper */
.wallpaper {
  position: absolute;
  top: 0;
  left: 0;
  width: 100%;
  height: 100%;
  fill: none;
  stroke: var(--doodle);
  stroke-width: 6;
  stroke-linecap: round;
  stroke-linejoin: round;
}

.wallpaper .solid {
  fill: var(--doodle);
  stroke: none;
}

.doodle-text {
  font-size: 112px;
  font-weight: 700;
}

.icon-defs {
  display: none;
}

/* date */
.date-pill {
  position: fixed;
  top: 3px;
  left: 50%;
  z-index: 2;
  transform: translateX(-50%);
  padding: 0 24px;
  border-radius: 22px;
  background: #171818;
  font-size: 32px;
  font-weight: 600;
  line-height: 44px;
  white-space: nowrap;
}

/* messages */
.chat {
  position: relative;
  display: flex;
  flex-direction: column;
  gap: 34px;
  margin-top: -50px;
  padding: 0 41px 11px;
}

.group {
  display: flex;
  flex-direction: column;
  align-items: flex-start;
  gap: 11px;
}

.group.sent {
  align-items: flex-end;
}

.bubble {
  position: relative;
  display: flex;
  justify-content: space-between;
  gap: 13px 34px;
  min-height: 82px;
  padding: 12px 24px 11px;
  border-radius: var(--radius);
  background: var(--received);
}

.sent .bubble {
  background: var(--sent);
}

.bubble.wide {
  width: 70%;
}

.bubble.stacked {
  flex-direction: column;
}

.tail::after {
  content: "";
  position: absolute;
  bottom: 0;
  left: -15px;
  width: 25px;
  height: 40px;
  background: inherit;
  clip-path: path("M25 0H15C15 15 10 32 0 40C10 40 19 38 25 33Z");
}

.sent .tail::after {
  left: auto;
  right: -15px;
  clip-path: path("M0 0H10C10 15 15 32 25 40C15 40 6 38 0 33Z");
}

.text {
  font-size: 39px;
  line-height: 54px;
}

.text a {
  color: #5fbf6f;
  text-decoration-thickness: 3px;
  text-underline-offset: 4px;
}

mark {
  margin: 0 -2px;
  padding: 2px;
  border-radius: 8px;
  background: #966f37;
  color: inherit;
}

.meta {
  display: flex;
  align-self: flex-end;
  gap: 8px;
  color: #a0a1a1;
  font-size: 28px;
  font-variant-numeric: tabular-nums;
  line-height: 34px;
}

.sent .meta {
  color: #a6bfb1;
}

.ticks {
  width: 38px;
  height: 28px;
  fill: none;
  stroke: currentColor;
  stroke-width: 3;
  stroke-linecap: round;
  stroke-linejoin: round;
}

/* scrollbar */
.scroll-thumb {
  position: fixed;
  top: 689px;
  right: 7px;
  width: 8px;
  height: 405px;
  border-radius: 4px;
  background: rgba(255, 255, 255, 0.5);
}
```
